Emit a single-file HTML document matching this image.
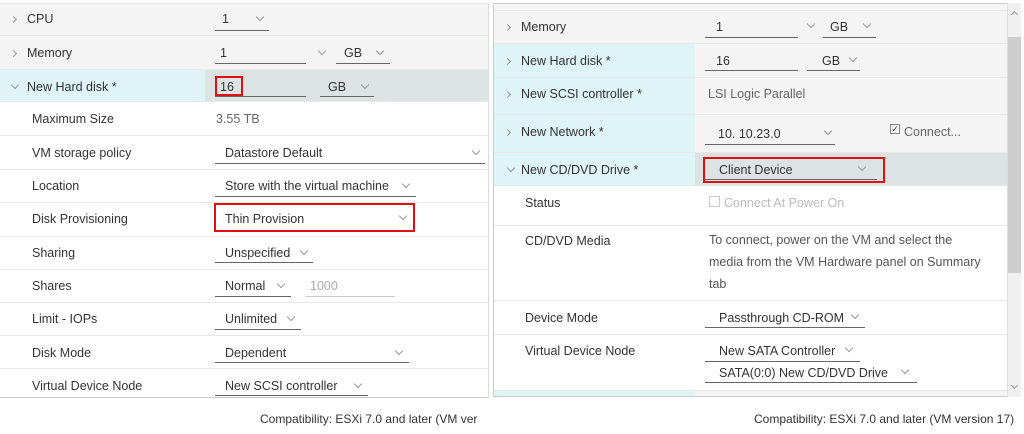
<!DOCTYPE html>
<html><head><style>
*{margin:0;padding:0;box-sizing:border-box}
body{width:1024px;height:434px;background:#fff;font-family:"Liberation Sans",sans-serif;font-size:12.5px;color:#333;position:relative;overflow:hidden}
.a{position:absolute;white-space:nowrap}
.r{position:absolute;border-bottom:1px solid #e8e8e8}
.u{position:absolute;border-bottom:1px solid #666;height:1px}
.red{position:absolute;border:2px solid #e01010}
.v{position:absolute;width:6px;height:6px;border-right:1px solid #999;border-bottom:1px solid #999;transform:rotate(45deg)}
.g{position:absolute;width:5px;height:5px;border-right:1px solid #999;border-top:1px solid #999;transform:rotate(45deg)}
</style></head><body>
<!-- LEFT PANEL -->
<div class="r" style="left:0;top:3px;width:488px;height:33px;background:#f4f4f4;border-top:1px solid #e0e0e0"></div>
<div class="r" style="left:0;top:36px;width:488px;height:34px;background:#f4f4f4"></div>
<div class="r" style="left:0;top:70px;width:205px;height:32px;background:#dff4f7"></div>
<div class="r" style="left:205px;top:70px;width:283px;height:32px;background:#dde2e2"></div>
<div style="position:absolute;left:488px;top:3px;width:1px;height:395px;background:#ddd"></div>
<div class="r" style="left:0;top:102px;width:488px;height:34px"></div>
<div class="r" style="left:0;top:136px;width:488px;height:34px"></div>
<div class="r" style="left:0;top:170px;width:488px;height:33px"></div>
<div class="r" style="left:0;top:203px;width:488px;height:34px"></div>
<div class="r" style="left:0;top:237px;width:488px;height:33px"></div>
<div class="r" style="left:0;top:270px;width:488px;height:33px"></div>
<div class="r" style="left:0;top:303px;width:488px;height:33px"></div>
<div class="r" style="left:0;top:336px;width:488px;height:33px"></div>
<div class="r" style="left:0;top:369px;width:488px;height:29px;border-bottom:1px solid #ccc"></div>

<div class="g" style="left:11px;top:17px"></div><div class="a" style="left:27px;top:12px">CPU</div>
<div class="a" style="left:222px;top:12px">1</div><div class="v" style="left:257px;top:14px"></div><div class="u" style="left:215px;top:30px;width:54px"></div>
<div class="g" style="left:11px;top:51px"></div><div class="a" style="left:27px;top:46px">Memory</div>
<div class="a" style="left:220px;top:46px">1</div><div class="v" style="left:319px;top:48px"></div><div class="u" style="left:215px;top:63px;width:91px"></div>
<div class="a" style="left:344px;top:46px">GB</div><div class="v" style="left:377px;top:48px"></div><div class="u" style="left:336px;top:63px;width:54px"></div>
<div class="v" style="left:12px;top:82px"></div><div class="a" style="left:27px;top:80px">New Hard disk *</div>
<div class="a" style="left:220px;top:80px">16</div><div class="u" style="left:215px;top:96px;width:91px"></div><div class="red" style="left:215px;top:76px;width:28px;height:20px"></div>
<div class="a" style="left:328px;top:80px">GB</div><div class="v" style="left:362px;top:82px"></div><div class="u" style="left:320px;top:96px;width:54px"></div>

<div class="a" style="left:32px;top:112px">Maximum Size</div><div class="a" style="left:216px;top:112px;color:#666">3.55 TB</div>
<div class="a" style="left:32px;top:146px">VM storage policy</div><div class="a" style="left:225px;top:146px">Datastore Default</div><div class="v" style="left:473px;top:148px"></div><div class="u" style="left:215px;top:163px;width:270px"></div>
<div class="a" style="left:32px;top:179px">Location</div><div class="a" style="left:225px;top:179px">Store with the virtual machine</div><div class="v" style="left:403px;top:181px"></div><div class="u" style="left:215px;top:196px;width:201px"></div>
<div class="a" style="left:32px;top:212px">Disk Provisioning</div><div class="a" style="left:225px;top:212px">Thin Provision</div><div class="v" style="left:400px;top:213px"></div><div class="red" style="left:214px;top:203px;width:201px;height:29px"></div>
<div class="a" style="left:32px;top:246px">Sharing</div><div class="a" style="left:225px;top:246px">Unspecified</div><div class="v" style="left:301px;top:248px"></div><div class="u" style="left:215px;top:262px;width:98px"></div>
<div class="a" style="left:32px;top:279px">Shares</div><div class="a" style="left:225px;top:279px">Normal</div><div class="v" style="left:278px;top:281px"></div><div class="u" style="left:215px;top:296px;width:76px"></div>
<div class="a" style="left:310px;top:279px;color:#aaa">1000</div><div class="u" style="left:305px;top:296px;width:90px;border-color:#ccc"></div>
<div class="a" style="left:32px;top:312px">Limit - IOPs</div><div class="a" style="left:225px;top:312px">Unlimited</div><div class="v" style="left:288px;top:314px"></div><div class="u" style="left:215px;top:329px;width:86px"></div>
<div class="a" style="left:32px;top:346px">Disk Mode</div><div class="a" style="left:225px;top:346px">Dependent</div><div class="v" style="left:396px;top:348px"></div><div class="u" style="left:215px;top:362px;width:194px"></div>
<div class="a" style="left:32px;top:379px">Virtual Device Node</div><div class="a" style="left:225px;top:379px">New SCSI controller</div><div class="v" style="left:355px;top:381px"></div><div class="u" style="left:215px;top:395px;width:153px"></div>
<div class="a" style="left:260px;top:412px;font-size:12px">Compatibility: ESXi 7.0 and later (VM ver</div>

<!-- RIGHT PANEL -->
<div style="position:absolute;left:493px;top:3px;width:514px;height:394px;border:1px solid #ccc;border-right:none;overflow:hidden">
<div class="r" style="left:0;top:0;width:514px;height:7px;background:#f4f4f4"></div>
<div class="r" style="left:0;top:7px;width:514px;height:33px;background:#f4f4f4"></div>
<div class="r" style="left:0;top:40px;width:201px;height:34px;background:#dff4f7"></div><div class="r" style="left:201px;top:40px;width:313px;height:34px;background:#f4f4f4"></div>
<div class="r" style="left:0;top:74px;width:201px;height:37px;background:#dff4f7"></div><div class="r" style="left:201px;top:74px;width:313px;height:37px;background:#f4f4f4"></div>
<div class="r" style="left:0;top:111px;width:201px;height:38px;background:#dff4f7"></div><div class="r" style="left:201px;top:111px;width:313px;height:38px;background:#f4f4f4"></div>
<div class="r" style="left:0;top:149px;width:201px;height:33px;background:#dff4f7"></div><div class="r" style="left:201px;top:149px;width:313px;height:33px;background:#dde2e2"></div>
<div class="r" style="left:0;top:182px;width:514px;height:40px"></div>
<div class="r" style="left:0;top:222px;width:514px;height:75px"></div>
<div class="r" style="left:0;top:297px;width:514px;height:34px"></div>
<div class="r" style="left:0;top:331px;width:514px;height:56px"></div>
<div class="r" style="left:0;top:387px;width:201px;height:10px;background:#dff4f7"></div><div class="r" style="left:201px;top:387px;width:313px;height:10px;background:#f4f4f4"></div>
</div>
<div style="position:absolute;left:1007px;top:3px;width:14px;height:394px;background:#f0f0f0;border-left:1px solid #ddd"></div>
<div style="position:absolute;left:1008px;top:37px;width:13px;height:236px;background:#cdcdcd"></div>
<div class="g" style="left:1012px;top:12px;transform:rotate(-45deg)"></div>
<div class="v" style="left:1012px;top:383px;width:5px;height:5px"></div>

<div class="g" style="left:505px;top:25px"></div><div class="a" style="left:521px;top:20px">Memory</div>
<div class="a" style="left:716px;top:20px">1</div><div class="v" style="left:808px;top:21px"></div><div class="u" style="left:705px;top:37px;width:93px"></div>
<div class="a" style="left:830px;top:20px">GB</div><div class="v" style="left:864px;top:21px"></div><div class="u" style="left:823px;top:37px;width:53px"></div>
<div class="g" style="left:505px;top:59px"></div><div class="a" style="left:521px;top:54px">New Hard disk *</div>
<div class="a" style="left:716px;top:54px">16</div><div class="u" style="left:705px;top:70px;width:93px"></div>
<div class="a" style="left:822px;top:54px">GB</div><div class="v" style="left:850px;top:55px"></div><div class="u" style="left:807px;top:70px;width:53px"></div>
<div class="g" style="left:505px;top:92px"></div><div class="a" style="left:521px;top:87px">New SCSI controller *</div><div class="a" style="left:708px;top:87px;color:#666">LSI Logic Parallel</div>
<div class="g" style="left:505px;top:130px"></div><div class="a" style="left:521px;top:125px">New Network *</div>
<div class="a" style="left:718px;top:127px">10. 10.23.0</div><div class="v" style="left:825px;top:128px"></div><div class="u" style="left:705px;top:144px;width:130px"></div>
<div style="position:absolute;left:890px;top:124px;width:10px;height:10px;border:1px solid #888;font-size:9px;line-height:8px;text-align:center">✓</div><div class="a" style="left:904px;top:125px;color:#666">Connect...</div>
<div class="v" style="left:508px;top:165px"></div><div class="a" style="left:521px;top:163px">New CD/DVD Drive *</div>
<div class="a" style="left:719px;top:163px">Client Device</div><div class="v" style="left:859px;top:164px"></div><div class="u" style="left:705px;top:179px;width:172px"></div>
<div class="red" style="left:703px;top:157px;width:182px;height:26px"></div>
<div class="a" style="left:525px;top:196px">Status</div>
<div style="position:absolute;left:709px;top:196px;width:11px;height:11px;border:1px solid #ccc"></div><div class="a" style="left:724px;top:196px;color:#bbb">Connect At Power On</div>
<div class="a" style="left:525px;top:234px">CD/DVD Media</div>
<div class="a" style="left:709px;top:229px;color:#555;line-height:22px">To connect, power on the VM and select the<br>media from the VM Hardware panel on Summary<br>tab</div>
<div class="a" style="left:525px;top:311px">Device Mode</div><div class="a" style="left:719px;top:311px">Passthrough CD-ROM</div><div class="v" style="left:852px;top:312px"></div><div class="u" style="left:705px;top:327px;width:160px"></div>
<div class="a" style="left:525px;top:344px">Virtual Device Node</div>
<div class="a" style="left:719px;top:344px">New SATA Controller</div><div class="v" style="left:846px;top:345px"></div><div class="u" style="left:705px;top:361px;width:155px"></div>
<div class="a" style="left:719px;top:366px">SATA(0:0) New CD/DVD Drive</div><div class="v" style="left:902px;top:367px"></div><div class="u" style="left:705px;top:382px;width:212px"></div>
<div class="a" style="left:754px;top:412px;font-size:12px">Compatibility: ESXi 7.0 and later (VM version 17)</div>
</body></html>
